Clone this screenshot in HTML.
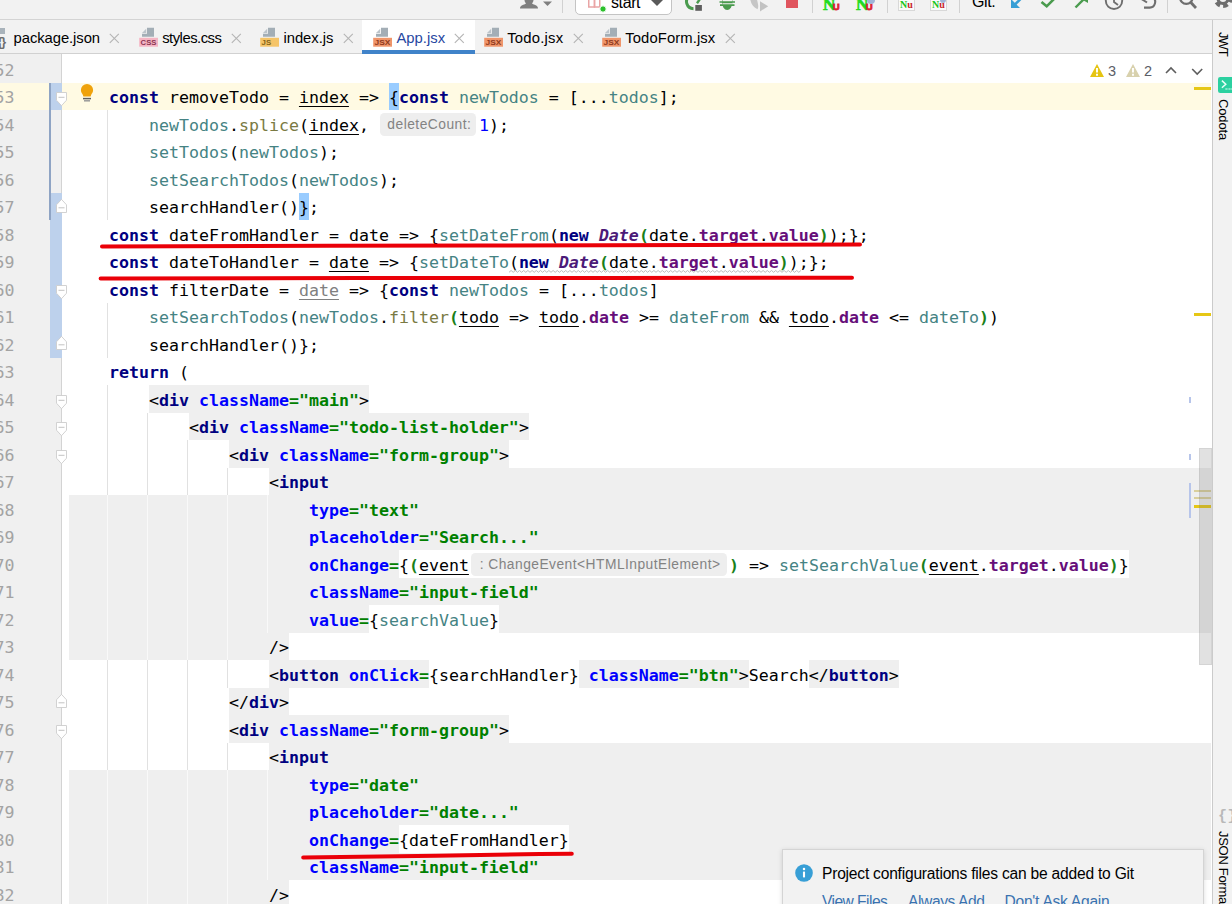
<!DOCTYPE html>
<html lang="en">
<head>
<meta charset="utf-8">
<title>App.jsx</title>
<style>
*{box-sizing:border-box;margin:0;padding:0}
html,body{width:1232px;height:904px;overflow:hidden;background:#fff}
body{position:relative;font-family:"Liberation Sans","DejaVu Sans",sans-serif;color:#000}
.abs,.r,.ln,.num,.fold{position:absolute}
#toolbar{position:absolute;left:0;top:0;width:1232px;height:20px;background:#f2f2f2;border-bottom:1px solid #d4d4d4}
#tabs{position:absolute;left:0;top:20px;width:1213px;height:34px;background:#f2f2f2;border-bottom:1px solid #d1d1d1}
#strip{position:absolute;left:1212px;top:20px;width:20px;height:884px;background:#f2f2f2;border-left:1px solid #cbcbcb}
#gutter{position:absolute;left:0;top:54px;width:62px;height:850px;background:#f0f0f0;border-right:1px solid #d3d3d3}
#editor{position:absolute;left:0;top:0;width:1212px;height:904px;overflow:hidden}
.ln{left:109px;height:27.5px;line-height:27.5px;white-space:pre;font-family:"DejaVu Sans Mono","Liberation Mono",monospace;font-size:16.6px;letter-spacing:0.006px;color:#000}
.k{color:#000080;font-weight:bold}
.v{color:#458383}
.p{text-decoration:underline;text-decoration-thickness:1px;text-underline-offset:3px}
.pu{color:#808080;text-decoration:underline;text-decoration-thickness:1px;text-underline-offset:3px}
.m{color:#7a7a43}
.f{color:#660e7a;font-weight:bold}
.c{color:#4b1a78;font-weight:bold;font-style:italic}
.a{color:#0000ff;font-weight:bold}
.s{color:#008000;font-weight:bold}
.n{color:#0000ff}
.g{color:#1a7f1a;font-weight:bold}
.hw{display:inline-block;height:22.9px;vertical-align:top;margin-top:0.95px;letter-spacing:0}
.hint{display:block;height:22.9px;line-height:23.4px;padding-left:2px;background:#eeeeee;border-radius:4.5px;color:#838383;font-family:"Liberation Sans",sans-serif;font-size:13.8px;text-align:center;overflow:hidden;white-space:pre}
.num{left:-5.6px;width:24px;height:27.5px;line-height:27.5px;font-family:"DejaVu Sans Mono","Liberation Mono",monospace;font-size:16.6px;color:#a3a3a3;white-space:pre}
.fold{left:56px}
.tab{position:absolute;top:0.8px;height:33px;line-height:34px;font-size:14.8px;color:#000;white-space:pre}
.tab .x{position:absolute;top:0;color:#b0b0b0;font-size:15px}

.vt{position:absolute;writing-mode:vertical-rl;font-size:13px;line-height:14px;white-space:pre;color:#000}
.sep{position:absolute;top:0;width:1px;height:13px;background:#d1d1d1}
#popup{position:absolute;left:782px;top:849px;width:422px;height:70px;background:#f2f2f2;border:1px solid #d4d4d4;box-shadow:0 1px 5px rgba(0,0,0,.13)}
#popup .t{position:absolute;left:39px;top:14px;font-size:15.6px;line-height:20px;white-space:pre;color:#000;letter-spacing:-0.22px}
#popup .lk{position:absolute;top:42px;font-size:15.6px;line-height:20px;white-space:pre;color:#3a72b0}
.wn{position:absolute;top:61px;font-size:14.5px;line-height:20px;color:#5a5d66}
.nu{font-family:"Liberation Serif",serif;font-size:17px;line-height:20px;white-space:pre;-webkit-text-stroke:0.7px #1fdc1f}
.uu{color:#dc2430;margin-left:-2.5px;font-family:"Liberation Sans",sans-serif;text-transform:uppercase;font-size:9.5px;-webkit-text-stroke:0.8px #dc2430}
.sm{width:17px;height:17px;border:1px solid #d8d8d8;background:#fafafa;font-family:"Liberation Serif",serif;font-size:10px;line-height:19px;text-align:center;white-space:pre;overflow:hidden}
</style>
</head>
<body>
<div id="editor">
<div id="gutter"></div>
<div class="r" style="left:107.00px;top:110.15px;width:1.00px;height:110.00px;background:#e1e1e1;"></div>
<div class="r" style="left:107.00px;top:302.65px;width:1.00px;height:55.00px;background:#e1e1e1;"></div>
<div class="r" style="left:107.00px;top:385.15px;width:1.00px;height:522.50px;background:#e1e1e1;"></div>
<div class="r" style="left:147.00px;top:412.65px;width:1.00px;height:495.00px;background:#e1e1e1;"></div>
<div class="r" style="left:187.00px;top:440.15px;width:1.00px;height:467.50px;background:#e1e1e1;"></div>
<div class="r" style="left:227.00px;top:467.65px;width:1.00px;height:220.00px;background:#e1e1e1;"></div>
<div class="r" style="left:227.00px;top:742.65px;width:1.00px;height:165.00px;background:#e1e1e1;"></div>
<div class="r" style="left:267.00px;top:495.15px;width:1.00px;height:137.50px;background:#e1e1e1;"></div>
<div class="r" style="left:267.00px;top:770.15px;width:1.00px;height:110.00px;background:#e1e1e1;"></div>
<div class="r" style="left:0.00px;top:82.65px;width:1211.00px;height:27.50px;background:#fffae3;"></div>
<div class="r" style="left:149.00px;top:385.15px;width:220.00px;height:27.50px;background:#efefef;"></div>
<div class="r" style="left:189.00px;top:412.65px;width:340.00px;height:27.50px;background:#efefef;"></div>
<div class="r" style="left:229.00px;top:440.15px;width:280.00px;height:27.50px;background:#efefef;"></div>
<div class="r" style="left:269.00px;top:467.65px;width:942.00px;height:27.50px;background:#efefef;"></div>
<div class="r" style="left:69.00px;top:495.15px;width:1142.00px;height:137.50px;background:#efefef;"></div>
<div class="r" style="left:69.00px;top:632.65px;width:220.00px;height:27.50px;background:#efefef;"></div>
<div class="r" style="left:269.00px;top:660.15px;width:160.00px;height:27.50px;background:#efefef;"></div>
<div class="r" style="left:579.00px;top:660.15px;width:170.00px;height:27.50px;background:#efefef;"></div>
<div class="r" style="left:809.00px;top:660.15px;width:90.00px;height:27.50px;background:#efefef;"></div>
<div class="r" style="left:229.00px;top:687.65px;width:60.00px;height:27.50px;background:#efefef;"></div>
<div class="r" style="left:229.00px;top:715.15px;width:280.00px;height:27.50px;background:#efefef;"></div>
<div class="r" style="left:269.00px;top:742.65px;width:942.00px;height:27.50px;background:#efefef;"></div>
<div class="r" style="left:69.00px;top:770.15px;width:1142.00px;height:110.00px;background:#efefef;"></div>
<div class="r" style="left:69.00px;top:880.15px;width:220.00px;height:27.50px;background:#efefef;"></div>
<div class="r" style="left:399.00px;top:550.15px;width:730.00px;height:27.50px;background:#fff;"></div>
<div class="r" style="left:369.00px;top:605.15px;width:130.00px;height:27.50px;background:#fff;"></div>
<div class="r" style="left:399.00px;top:825.15px;width:170.00px;height:27.50px;background:#fff;"></div>
<div class="r" style="left:388.80px;top:83.15px;width:10.20px;height:26.70px;background:#99ccff;"></div>
<div class="r" style="left:298.80px;top:193.15px;width:10.20px;height:26.70px;background:#99ccff;"></div>
<div class="r" style="left:107.00px;top:495.15px;width:1.00px;height:165.00px;background:#f9f9f9;"></div>
<div class="r" style="left:107.00px;top:770.15px;width:1.00px;height:137.50px;background:#f9f9f9;"></div>
<div class="r" style="left:147.00px;top:495.15px;width:1.00px;height:165.00px;background:#f9f9f9;"></div>
<div class="r" style="left:147.00px;top:770.15px;width:1.00px;height:137.50px;background:#f9f9f9;"></div>
<div class="r" style="left:187.00px;top:495.15px;width:1.00px;height:165.00px;background:#f9f9f9;"></div>
<div class="r" style="left:187.00px;top:770.15px;width:1.00px;height:137.50px;background:#f9f9f9;"></div>
<div class="r" style="left:227.00px;top:495.15px;width:1.00px;height:165.00px;background:#f9f9f9;"></div>
<div class="r" style="left:227.00px;top:770.15px;width:1.00px;height:137.50px;background:#f9f9f9;"></div>
<div class="r" style="left:267.00px;top:495.15px;width:1.00px;height:137.50px;background:#f9f9f9;"></div>
<div class="r" style="left:267.00px;top:770.15px;width:1.00px;height:110.00px;background:#f9f9f9;"></div>
<div class="r" style="left:49.50px;top:82.65px;width:12.00px;height:27.50px;background:#bdd1ec;"></div>
<div class="r" style="left:49.50px;top:192.65px;width:12.00px;height:165.00px;background:#bdd1ec;"></div>
<div class="r" style="left:49.00px;top:82.65px;width:1.60px;height:137.50px;background:#8fa4c4;"></div>
<div class="num" style="top:56.75px">52</div>
<div class="num" style="top:84.25px">53</div>
<div class="num" style="top:111.75px">54</div>
<div class="num" style="top:139.25px">55</div>
<div class="num" style="top:166.75px">56</div>
<div class="num" style="top:194.25px">57</div>
<div class="num" style="top:221.75px">58</div>
<div class="num" style="top:249.25px">59</div>
<div class="num" style="top:276.75px">60</div>
<div class="num" style="top:304.25px">61</div>
<div class="num" style="top:331.75px">62</div>
<div class="num" style="top:359.25px">63</div>
<div class="num" style="top:386.75px">64</div>
<div class="num" style="top:414.25px">65</div>
<div class="num" style="top:441.75px">66</div>
<div class="num" style="top:469.25px">67</div>
<div class="num" style="top:496.75px">68</div>
<div class="num" style="top:524.25px">69</div>
<div class="num" style="top:551.75px">70</div>
<div class="num" style="top:579.25px">71</div>
<div class="num" style="top:606.75px">72</div>
<div class="num" style="top:634.25px">73</div>
<div class="num" style="top:661.75px">74</div>
<div class="num" style="top:689.25px">75</div>
<div class="num" style="top:716.75px">76</div>
<div class="num" style="top:744.25px">77</div>
<div class="num" style="top:771.75px">78</div>
<div class="num" style="top:799.25px">79</div>
<div class="num" style="top:826.75px">80</div>
<div class="num" style="top:854.25px">81</div>
<div class="num" style="top:881.75px">82</div>
<svg class="fold" style="top:92.25px" width="11" height="14" viewBox="0 0 11 14"><path d="M0.5 0.5H10.5V8.2L5.5 13.7L0.5 8.2Z" fill="#fff" stroke="#cdcdcd" stroke-width="0.9"/><path d="M2.5 5.3H8.5" stroke="#c4c4c4"/></svg><svg class="fold" style="top:284.75px" width="11" height="14" viewBox="0 0 11 14"><path d="M0.5 0.5H10.5V8.2L5.5 13.7L0.5 8.2Z" fill="#fff" stroke="#cdcdcd" stroke-width="0.9"/><path d="M2.5 5.3H8.5" stroke="#c4c4c4"/></svg><svg class="fold" style="top:394.75px" width="11" height="14" viewBox="0 0 11 14"><path d="M0.5 0.5H10.5V8.2L5.5 13.7L0.5 8.2Z" fill="#fff" stroke="#cdcdcd" stroke-width="0.9"/><path d="M2.5 5.3H8.5" stroke="#c4c4c4"/></svg><svg class="fold" style="top:422.25px" width="11" height="14" viewBox="0 0 11 14"><path d="M0.5 0.5H10.5V8.2L5.5 13.7L0.5 8.2Z" fill="#fff" stroke="#cdcdcd" stroke-width="0.9"/><path d="M2.5 5.3H8.5" stroke="#c4c4c4"/></svg><svg class="fold" style="top:449.75px" width="11" height="14" viewBox="0 0 11 14"><path d="M0.5 0.5H10.5V8.2L5.5 13.7L0.5 8.2Z" fill="#fff" stroke="#cdcdcd" stroke-width="0.9"/><path d="M2.5 5.3H8.5" stroke="#c4c4c4"/></svg><svg class="fold" style="top:724.75px" width="11" height="14" viewBox="0 0 11 14"><path d="M0.5 0.5H10.5V8.2L5.5 13.7L0.5 8.2Z" fill="#fff" stroke="#cdcdcd" stroke-width="0.9"/><path d="M2.5 5.3H8.5" stroke="#c4c4c4"/></svg><svg class="fold" style="top:198.85px" width="11" height="14" viewBox="0 0 11 14"><path d="M0.5 13.5H10.5V5.8L5.5 0.4L0.5 5.8Z" fill="#fff" stroke="#cdcdcd" stroke-width="0.9"/><path d="M2.5 8.8H8.5" stroke="#c4c4c4"/></svg><svg class="fold" style="top:336.35px" width="11" height="14" viewBox="0 0 11 14"><path d="M0.5 13.5H10.5V5.8L5.5 0.4L0.5 5.8Z" fill="#fff" stroke="#cdcdcd" stroke-width="0.9"/><path d="M2.5 8.8H8.5" stroke="#c4c4c4"/></svg><svg class="fold" style="top:693.85px" width="11" height="14" viewBox="0 0 11 14"><path d="M0.5 13.5H10.5V5.8L5.5 0.4L0.5 5.8Z" fill="#fff" stroke="#cdcdcd" stroke-width="0.9"/><path d="M2.5 8.8H8.5" stroke="#c4c4c4"/></svg>
<svg class="abs" style="left:79px;top:83px" width="16" height="20" viewBox="0 0 16 20"><path d="M8 1A6.1 6.1 0 0 1 14.1 7.1C14.1 9.6 12.6 10.6 12 12.2C11.8 12.9 11.9 13.6 11 13.6H5C4.1 13.6 4.2 12.9 4 12.2C3.4 10.6 1.9 9.6 1.9 7.1A6.1 6.1 0 0 1 8 1Z" fill="#efa20c"/><path d="M4 15.6H12" stroke="#5e5e5e" stroke-width="1.5"/><path d="M5 17.8H11" stroke="#9a9a9a" stroke-width="1.5"/></svg>
<div class="ln" style="top:84.45px"><span class="k">const</span> removeTodo = <span class="p">index</span> =&gt; {<span class="k">const</span> <span class="v">newTodos</span> = [...<span class="v">todos</span>];</div>
<div class="ln" style="top:111.95px">    <span class="v">newTodos</span>.<span class="m">splice</span>(<span class="p">index</span>, <span class="hw" style="width:100px"><span class="hint" style="margin-left:1.4px;width:96px;letter-spacing:0.479px">deleteCount:</span></span><span class="n">1</span>);</div>
<div class="ln" style="top:139.45px">    <span class="v">setTodos</span>(<span class="v">newTodos</span>);</div>
<div class="ln" style="top:166.95px">    <span class="v">setSearchTodos</span>(<span class="v">newTodos</span>);</div>
<div class="ln" style="top:194.45px">    searchHandler()};</div>
<div class="ln" style="top:221.95px"><span class="k">const</span> dateFromHandler = <span class="p">date</span> =&gt; {<span class="v">setDateFrom</span>(<span class="k">new</span> <span class="c">Date</span><span class="g">(</span>date.<span class="f">target</span>.<span class="f">value</span><span class="g">)</span>);};</div>
<div class="ln" style="top:249.45px"><span class="k">const</span> dateToHandler = <span class="p">date</span> =&gt; {<span class="v">setDateTo</span><span class="w">(</span><span class="k w">new</span><span class="w"> </span><span class="c w">Date</span><span class="g w">(</span><span class="w">date.</span><span class="f w">target</span><span class="w">.</span><span class="f w">value</span><span class="g w">)</span><span class="w">)</span>;};</div>
<div class="ln" style="top:276.95px"><span class="k">const</span> filterDate = <span class="pu">date</span> =&gt; {<span class="k">const</span> <span class="v">newTodos</span> = [...<span class="v">todos</span>]</div>
<div class="ln" style="top:304.45px">    <span class="v">setSearchTodos</span>(<span class="v">newTodos</span>.<span class="m">filter</span><span class="g">(</span><span class="p">todo</span> =&gt; <span class="p">todo</span>.<span class="f">date</span> &gt;= <span class="v">dateFrom</span> &amp;&amp; <span class="p">todo</span>.<span class="f">date</span> &lt;= <span class="v">dateTo</span><span class="g">)</span>)</div>
<div class="ln" style="top:331.95px">    searchHandler()};</div>
<div class="ln" style="top:359.45px"><span class="k">return</span> (</div>
<div class="ln" style="top:386.95px">    &lt;<span class="k">div</span> <span class="a">className</span><span class="s">="main"</span>&gt;</div>
<div class="ln" style="top:414.45px">        &lt;<span class="k">div</span> <span class="a">className</span><span class="s">="todo-list-holder"</span>&gt;</div>
<div class="ln" style="top:441.95px">            &lt;<span class="k">div</span> <span class="a">className</span><span class="s">="form-group"</span>&gt;</div>
<div class="ln" style="top:469.45px">                &lt;<span class="k">input</span></div>
<div class="ln" style="top:496.95px">                    <span class="a">type</span><span class="s">="text"</span></div>
<div class="ln" style="top:524.45px">                    <span class="a">placeholder</span><span class="s">="Search..."</span></div>
<div class="ln" style="top:551.95px">                    <span class="a">onChange</span><span class="s">=</span>{<span class="g">(</span><span class="p">event</span><span class="hw" style="width:260px"><span class="hint" style="margin-left:1.7px;width:256px;letter-spacing:0.469px;padding-left:3px">: ChangeEvent&lt;HTMLInputElement&gt;</span></span><span class="g">)</span> =&gt; <span class="v">setSearchValue</span><span class="g">(</span><span class="p">event</span>.<span class="f">target</span>.<span class="f">value</span><span class="g">)</span>}</div>
<div class="ln" style="top:579.45px">                    <span class="a">className</span><span class="s">="input-field"</span></div>
<div class="ln" style="top:606.95px">                    <span class="a">value</span><span class="s">=</span>{<span class="v">searchValue</span>}</div>
<div class="ln" style="top:634.45px">                /&gt;</div>
<div class="ln" style="top:661.95px">                &lt;<span class="k">button</span> <span class="a">onClick</span><span class="s">=</span>{searchHandler} <span class="a">className</span><span class="s">="btn"</span>&gt;Search&lt;/<span class="k">button</span>&gt;</div>
<div class="ln" style="top:689.45px">            &lt;/<span class="k">div</span>&gt;</div>
<div class="ln" style="top:716.95px">            &lt;<span class="k">div</span> <span class="a">className</span><span class="s">="form-group"</span>&gt;</div>
<div class="ln" style="top:744.45px">                &lt;<span class="k">input</span></div>
<div class="ln" style="top:771.95px">                    <span class="a">type</span><span class="s">="date"</span></div>
<div class="ln" style="top:799.45px">                    <span class="a">placeholder</span><span class="s">="date..."</span></div>
<div class="ln" style="top:826.95px">                    <span class="a">onChange</span><span class="s">=</span>{dateFromHandler}</div>
<div class="ln" style="top:854.45px">                    <span class="a">className</span><span class="s">="input-field"</span></div>
<div class="ln" style="top:881.95px">                /&gt;</div>

<!-- inspection widget -->
<svg class="abs" style="left:1089px;top:63px" width="52" height="15" viewBox="0 0 52 15"><path d="M8 1L15 14H1Z" fill="#e5c412"/><path d="M8 5V9.6M8 10.8V12.8" stroke="#fff" stroke-width="1.9"/><path d="M44 1L51 14H37Z" fill="#d8d1ad"/><path d="M44 5V9.6M44 10.8V12.8" stroke="#fff" stroke-width="1.9"/></svg>
<div class="wn" style="left:1108px">3</div>
<div class="wn" style="left:1144px">2</div>
<svg class="abs" style="left:1164px;top:66px" width="40" height="10" viewBox="0 0 40 10"><path d="M2 7L7 2L12 7" fill="none" stroke="#5e5e5e" stroke-width="1.6"/><path d="M28.2 3L33.2 8L38.2 3" fill="none" stroke="#5e5e5e" stroke-width="1.6"/></svg>
<!-- error stripe -->
<div class="r" style="left:1194px;top:86.5px;width:17px;height:3px;background:#e6c716"></div>
<div class="r" style="left:1194px;top:312.5px;width:17px;height:3px;background:#e6c716"></div>
<div class="r" style="left:1189px;top:397px;width:2px;height:6px;background:#b7c5ea"></div>
<div class="r" style="left:1189px;top:453.5px;width:2px;height:6px;background:#b7c5ea"></div>
<div class="r" style="left:1189px;top:483px;width:2px;height:35px;background:#b7c5ea"></div>
<div class="r" style="left:1194px;top:489.5px;width:17px;height:2px;background:#d9cf9c"></div>
<div class="r" style="left:1194px;top:497px;width:17px;height:2px;background:#d9cf9c"></div>
<div class="r" style="left:1194px;top:504.5px;width:17px;height:3px;background:#e6c716"></div>
<!-- scrollbar thumb -->
<div class="r" style="left:1199px;top:448px;width:12.5px;height:217px;background:rgba(120,120,120,.22);border:1px solid rgba(120,120,120,.12)"></div>
<!-- hand drawn red lines -->
<svg class="abs" style="left:0;top:0" width="1212" height="904" viewBox="0 0 1212 904"><path d="M509.0 272.3L511.1 270.5L513.2 272.3L515.3 270.5L517.4 272.3L519.5 270.5L521.6 272.3L523.7 270.5L525.8 272.3L527.9 270.5L530.0 272.3L532.1 270.5L534.2 272.3L536.3 270.5L538.4 272.3L540.5 270.5L542.6 272.3L544.7 270.5L546.8 272.3L548.9 270.5L551.0 272.3L553.1 270.5L555.2 272.3L557.3 270.5L559.4 272.3L561.5 270.5L563.6 272.3L565.7 270.5L567.8 272.3L569.9 270.5L572.0 272.3L574.1 270.5L576.2 272.3L578.3 270.5L580.4 272.3L582.5 270.5L584.6 272.3L586.7 270.5L588.8 272.3L590.9 270.5L593.0 272.3L595.1 270.5L597.2 272.3L599.3 270.5L601.4 272.3L603.5 270.5L605.6 272.3L607.7 270.5L609.8 272.3L611.9 270.5L614.0 272.3L616.1 270.5L618.2 272.3L620.3 270.5L622.4 272.3L624.5 270.5L626.6 272.3L628.7 270.5L630.8 272.3L632.9 270.5L635.0 272.3L637.1 270.5L639.2 272.3L641.3 270.5L643.4 272.3L645.5 270.5L647.6 272.3L649.7 270.5L651.8 272.3L653.9 270.5L656.0 272.3L658.1 270.5L660.2 272.3L662.3 270.5L664.4 272.3L666.5 270.5L668.6 272.3L670.7 270.5L672.8 272.3L674.9 270.5L677.0 272.3L679.1 270.5L681.2 272.3L683.3 270.5L685.4 272.3L687.5 270.5L689.6 272.3L691.7 270.5L693.8 272.3L695.9 270.5L698.0 272.3L700.1 270.5L702.2 272.3L704.3 270.5L706.4 272.3L708.5 270.5L710.6 272.3L712.7 270.5L714.8 272.3L716.9 270.5L719.0 272.3L721.1 270.5L723.2 272.3L725.3 270.5L727.4 272.3L729.5 270.5L731.6 272.3L733.7 270.5L735.8 272.3L737.9 270.5L740.0 272.3L742.1 270.5L744.2 272.3L746.3 270.5L748.4 272.3L750.5 270.5L752.6 272.3L754.7 270.5L756.8 272.3L758.9 270.5L761.0 272.3L763.1 270.5L765.2 272.3L767.3 270.5L769.4 272.3L771.5 270.5L773.6 272.3L775.7 270.5L777.8 272.3L779.9 270.5L782.0 272.3L784.1 270.5L786.2 272.3L788.3 270.5L790.4 272.3L792.5 270.5L794.6 272.3L796.7 270.5L798.8 272.3L800.9 270.5" stroke="#bdbdbd" stroke-width="1" fill="none"/><g fill="none" stroke="#ea0008" stroke-width="4" stroke-linecap="round">
<path d="M102 246.4C200 246.1 360 245.7 480 245.5C560 245.4 640 245.2 700 245C760 244.8 820 244.6 860 244.5"/>
<path d="M100.6 278.4C190 278.3 280 278.2 360 278.1C450 278 540 277.9 610 277.9C700 277.8 790 277.8 852 277.8"/>
<path d="M303.2 857.4C350 856.8 395 856.2 436 855.7C480 855.1 515 854.5 540 854.1C552 853.9 562 853.85 571.8 853.8"/>
</g></svg>
<!-- notification -->
<div id="popup">
<svg class="abs" style="left:12px;top:13.7px" width="18" height="18" viewBox="0 0 18 18"><circle cx="9" cy="9" r="8.8" fill="#389fd6"/><path d="M9 7.6V13.4" stroke="#fff" stroke-width="2.1"/><circle cx="9" cy="4.9" r="1.25" fill="#fff"/></svg>
<div class="t" id="pt">Project configurations files can be added to Git</div>
<div class="lk" style="left:39px;letter-spacing:-0.55px">View Files</div>
<div class="lk" style="left:125px;letter-spacing:-0.4px">Always Add</div>
<div class="lk" style="left:221.5px;letter-spacing:-0.25px">Don't Ask Again</div>
</div>
</div>
<div id="toolbar">
<svg class="abs" style="left:518px;top:0" width="40" height="12" viewBox="0 0 40 12"><path d="M2 8.5C2 5 6 5 8 3.5C6.5 2 6.5 0 6.5 0H15.5C15.5 0 15.5 2 14 3.5C16 5 20 5 20 8.5Z" fill="#7f7f7f"/><path d="M25 1.5H34L29.5 6Z" fill="#7f7f7f"/></svg>
<div class="sep" style="left:562px"></div>
<div class="abs" style="left:575px;top:-6px;width:97px;height:21px;background:#fff;border:1px solid #c4c4c4;border-radius:5px"></div>
<svg class="abs" style="left:586px;top:0" width="24" height="14" viewBox="0 0 24 14"><path d="M2.75 0V7H8.5V0M13.75 0V7" fill="none" stroke="#e9a5a5" stroke-width="1.5"/><path d="M8.5 0V7H13.75" fill="none" stroke="#e9a5a5" stroke-width="1.5"/><circle cx="17" cy="9" r="3.2" fill="#2cc02c" stroke="#fff" stroke-width="1"/></svg>
<div class="abs" style="left:611px;top:-6px;font-size:16px;line-height:18px;white-space:pre;letter-spacing:-0.4px">start</div>
<svg class="abs" style="left:648px;top:0" width="20" height="8" viewBox="0 0 20 8"><path d="M1 -2H17L9 6Z" fill="#5a5a5a"/></svg>
<svg class="abs" style="left:684px;top:0" width="22" height="12" viewBox="0 0 22 12"><path d="M9.5 8.7A7 7 0 0 1 5.5 -4" fill="none" stroke="#4a9b4e" stroke-width="3"/><path d="M13 3.2L16 -1" stroke="#4a9b4e" stroke-width="2.4"/><rect x="11.3" y="5" width="6.6" height="5.8" fill="#5e5e5e"/></svg>
<svg class="abs" style="left:718px;top:0" width="20" height="12" viewBox="0 0 20 12"><ellipse cx="9.2" cy="2" rx="5.2" ry="8" fill="#4a9b4e"/><path d="M1.5 2H17M2 5.2H16.5" stroke="#4a9b4e" stroke-width="1.7"/><path d="M4.5 0.6H14M4.5 3.7H14" stroke="#f2f2f2" stroke-width="1.1"/></svg>
<svg class="abs" style="left:748px;top:0" width="24" height="13" viewBox="0 0 24 13"><path d="M2 -4C2 3 5 7.5 9.5 9.2C11.5 6 9 2 8.5 -4Z" fill="#c6c6c6"/><path d="M12 1.2L20.2 6.2L12 11.4Z" fill="#c2c2c2"/></svg>
<div class="abs" style="left:786px;top:0;width:12.2px;height:8px;background:#e0555e"></div>
<div class="sep" style="left:812px"></div>
<div class="abs nu" style="left:823px;top:-5.5px"><b style="color:#1fdc1f">N</b><b class="uu">u</b></div>
<div class="abs nu" style="left:856px;top:-5.5px"><b style="color:#1fdc1f">N</b><b class="uu">u</b></div>
<div class="abs" style="left:867px;top:0;width:8px;height:4px;background:#9fb4d8;border-radius:0 0 4px 4px"></div>
<div class="sep" style="left:887px"></div>
<div class="abs sm" style="left:898px;top:-6px"><b style="color:#19c519">N</b><b style="color:#c8242a">u</b></div>
<div class="abs sm" style="left:930px;top:-6px"><b style="color:#19c519">N</b><b style="color:#c8242a">u</b></div>
<div class="abs" style="left:940px;top:0;width:6px;height:3px;background:#9fb4d8;border-radius:0 0 3px 3px"></div>
<div class="sep" style="left:959px"></div>
<div class="abs" style="left:972px;top:-7px;font-size:16px;line-height:18px;white-space:pre;letter-spacing:-0.4px">Git:</div>
<svg class="abs" style="left:1008px;top:0" width="18" height="10" viewBox="0 0 18 10"><path d="M15.5 -4L6 5.5" stroke="#389fd6" stroke-width="2.6" fill="none"/><path d="M3 -1V8H12Z" fill="#389fd6"/></svg>
<svg class="abs" style="left:1039px;top:0" width="20" height="10" viewBox="0 0 20 10"><path d="M2.5 2L7.7 6.3L17 -3" stroke="#4a9b4e" stroke-width="2.6" fill="none"/></svg>
<svg class="abs" style="left:1072px;top:0" width="20" height="10" viewBox="0 0 20 10"><path d="M3.5 7.5L15 -4" stroke="#4a9b4e" stroke-width="2.4" fill="none"/><path d="M9 -1H16V3Z" fill="#4a9b4e"/></svg>
<svg class="abs" style="left:1103px;top:0" width="22" height="12" viewBox="0 0 22 12"><circle cx="11" cy="0.8" r="8.2" fill="none" stroke="#6e6e6e" stroke-width="1.9"/><path d="M11 -5V2L15 5" stroke="#6e6e6e" stroke-width="1.8" fill="none"/></svg>
<svg class="abs" style="left:1138px;top:0" width="22" height="12" viewBox="0 0 22 12"><path d="M6 7.6H11A5.6 5.6 0 0 0 14 -3" fill="none" stroke="#6e6e6e" stroke-width="2.1"/><path d="M3.5 -1L9 2.5" fill="none" stroke="#6e6e6e" stroke-width="2"/></svg>
<div class="sep" style="left:1167px"></div>
<svg class="abs" style="left:1176px;top:0" width="22" height="12" viewBox="0 0 22 12"><circle cx="10.3" cy="-2.5" r="6.3" fill="none" stroke="#6e6e6e" stroke-width="2.2"/><path d="M14.4 2L20 8" stroke="#6e6e6e" stroke-width="2.8"/></svg>
<svg class="abs" style="left:1211px;top:0" width="21" height="12" viewBox="0 0 21 12"><circle cx="12" cy="-1.5" r="7.3" fill="none" stroke="#6e6e6e" stroke-width="4.5" stroke-dasharray="4.6 3.05" stroke-dashoffset="1"/><circle cx="12" cy="-1.5" r="5" fill="none" stroke="#6e6e6e" stroke-width="3"/></svg>
</div>
<div id="tabs">
<div class="abs" style="left:362px;top:0;width:113px;height:33px;background:#fff"></div>
<div class="abs" style="left:362px;top:30px;width:113px;height:4px;background:#4083c9"></div>
<div class="abs" style="left:0;top:7.8px;width:5px;height:5.8px;background:#a9b3bb"></div><div class="abs" style="left:-2.5px;top:14.5px;font-family:'Liberation Sans',sans-serif;font-size:12.5px;line-height:14px;font-weight:bold;color:#6e6e6e;letter-spacing:-1.2px;white-space:pre">{}</div>
<div class="tab" style="left:13.6px;letter-spacing:-0.067px;color:#000">package.json</div>
<svg class="abs" style="left:109.3px;top:12.6px" width="11" height="11" viewBox="0 0 11 11"><path d="M0.8 0.8L9.8 9.8M9.8 0.8L0.8 9.8" stroke="#b4b4b4" stroke-width="1.1" fill="none"/></svg>
<svg class="abs" style="left:139.1px;top:7px" width="20" height="21" viewBox="0 0 20 21"><path d="M8 0.8H15V9.7H3V6.8H8Z" fill="#a3aeb6"/><path d="M3 6H7.2V1.8Z" fill="#bcc4ca"/><rect x="0.2" y="10.8" width="18.8" height="8.9" fill="#f5b5c4"/><text x="1.6" y="18.4" font-family="Liberation Sans, sans-serif" font-weight="bold" font-size="8" fill="#8c3552" textLength="15.8" lengthAdjust="spacingAndGlyphs">CSS</text></svg>
<div class="tab" style="left:162.2px;letter-spacing:-0.494px;color:#000">styles.css</div>
<svg class="abs" style="left:231.0px;top:12.6px" width="11" height="11" viewBox="0 0 11 11"><path d="M0.8 0.8L9.8 9.8M9.8 0.8L0.8 9.8" stroke="#b4b4b4" stroke-width="1.1" fill="none"/></svg>
<svg class="abs" style="left:259.9px;top:7px" width="20" height="21" viewBox="0 0 20 21"><path d="M8 0.8H15V9.7H3V6.8H8Z" fill="#a3aeb6"/><path d="M3 6H7.2V1.8Z" fill="#bcc4ca"/><rect x="0.2" y="10.8" width="18.8" height="8.9" fill="#f5c468"/><text x="1.6" y="18.4" font-family="Liberation Sans, sans-serif" font-weight="bold" font-size="8" fill="#86651a" textLength="9.6" lengthAdjust="spacingAndGlyphs">JS</text></svg>
<div class="tab" style="left:283.5px;letter-spacing:-0.046px;color:#000">index.js</div>
<svg class="abs" style="left:343.4px;top:12.6px" width="11" height="11" viewBox="0 0 11 11"><path d="M0.8 0.8L9.8 9.8M9.8 0.8L0.8 9.8" stroke="#b4b4b4" stroke-width="1.1" fill="none"/></svg>
<svg class="abs" style="left:372.9px;top:7px" width="20" height="21" viewBox="0 0 20 21"><path d="M8 0.8H15V9.7H3V6.8H8Z" fill="#a3aeb6"/><path d="M3 6H7.2V1.8Z" fill="#bcc4ca"/><rect x="0.2" y="10.8" width="18.8" height="8.9" fill="#f0956a"/><text x="1.6" y="18.4" font-family="Liberation Sans, sans-serif" font-weight="bold" font-size="8" fill="#8f3a1e" textLength="15.8" lengthAdjust="spacingAndGlyphs">JSX</text></svg>
<div class="tab" style="left:396.4px;letter-spacing:0.024px;color:#27479f">App.jsx</div>
<svg class="abs" style="left:454.3px;top:12.6px" width="11" height="11" viewBox="0 0 11 11"><path d="M0.8 0.8L9.8 9.8M9.8 0.8L0.8 9.8" stroke="#b4b4b4" stroke-width="1.1" fill="none"/></svg>
<svg class="abs" style="left:484.0px;top:7px" width="20" height="21" viewBox="0 0 20 21"><path d="M8 0.8H15V9.7H3V6.8H8Z" fill="#a3aeb6"/><path d="M3 6H7.2V1.8Z" fill="#bcc4ca"/><rect x="0.2" y="10.8" width="18.8" height="8.9" fill="#f0956a"/><text x="1.6" y="18.4" font-family="Liberation Sans, sans-serif" font-weight="bold" font-size="8" fill="#8f3a1e" textLength="15.8" lengthAdjust="spacingAndGlyphs">JSX</text></svg>
<div class="tab" style="left:507.2px;letter-spacing:0.238px;color:#000">Todo.jsx</div>
<svg class="abs" style="left:573.0px;top:12.6px" width="11" height="11" viewBox="0 0 11 11"><path d="M0.8 0.8L9.8 9.8M9.8 0.8L0.8 9.8" stroke="#b4b4b4" stroke-width="1.1" fill="none"/></svg>
<svg class="abs" style="left:602.0px;top:7px" width="20" height="21" viewBox="0 0 20 21"><path d="M8 0.8H15V9.7H3V6.8H8Z" fill="#a3aeb6"/><path d="M3 6H7.2V1.8Z" fill="#bcc4ca"/><rect x="0.2" y="10.8" width="18.8" height="8.9" fill="#f0956a"/><text x="1.6" y="18.4" font-family="Liberation Sans, sans-serif" font-weight="bold" font-size="8" fill="#8f3a1e" textLength="15.8" lengthAdjust="spacingAndGlyphs">JSX</text></svg>
<div class="tab" style="left:625.2px;letter-spacing:0.116px;color:#000">TodoForm.jsx</div>
<svg class="abs" style="left:724.5px;top:12.6px" width="11" height="11" viewBox="0 0 11 11"><path d="M0.8 0.8L9.8 9.8M9.8 0.8L0.8 9.8" stroke="#b4b4b4" stroke-width="1.1" fill="none"/></svg>
</div>
<div id="strip">
<div class="vt" style="left:2.5px;top:11.5px;letter-spacing:-1px">JWT</div>
<svg class="abs" style="left:5px;top:57px" width="15" height="16" viewBox="0 0 15 16"><rect x="0" y="0.1" width="20" height="15.8" rx="2.2" fill="#2bd0a0"/><path d="M3.9 3.6L7.8 7.2L3.9 10.8" fill="none" stroke="#e9fff8" stroke-width="1.5"/><path d="M7.3 12H9.6M10.4 12H12.6M13.2 12H15" stroke="#d8fff3" stroke-width="1.2"/></svg>
<div class="vt" style="left:2.5px;top:78.5px;letter-spacing:-0.15px">Codota</div>
<div class="abs" style="left:5px;top:787px;font-family:'Liberation Mono',monospace;font-weight:bold;font-size:15px;line-height:20px;color:#b9b9b9;white-space:pre;letter-spacing:0.5px">{}</div>
<div class="vt" style="left:2.5px;top:811px;letter-spacing:-0.3px">JSON Format</div>
</div>
</div>
</body>
</html>
